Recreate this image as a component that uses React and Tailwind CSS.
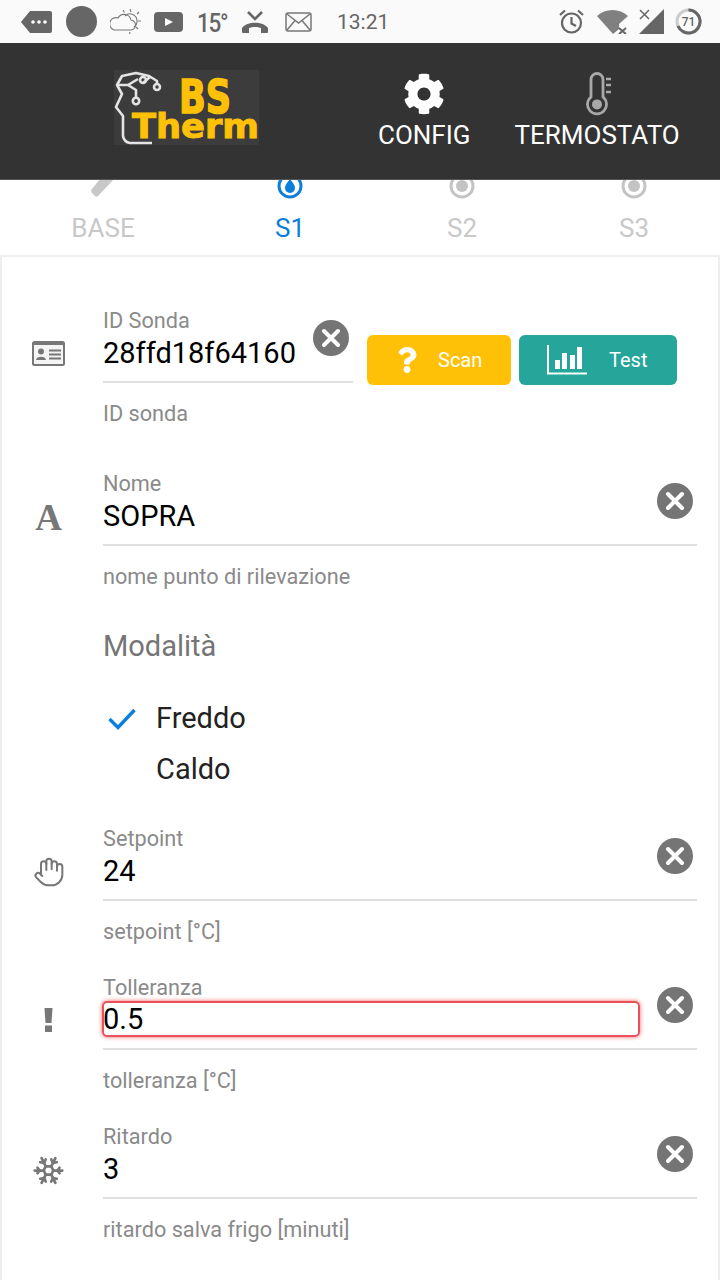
import React from "react";
import { FaCog, FaQuestion } from "react-icons/fa";
import { Hand, Snowflake } from "lucide-react";

const roboto = { fontFamily: "Roboto, sans-serif" };

function Clear() {
  return (
    <svg width="36" height="36" viewBox="0 0 36 36" className="block">
      <circle cx="18" cy="18" r="18" fill="#757575" />
      <path d="M11 11 L25 25 M25 11 L11 25" stroke="#fff" strokeWidth="4" strokeLinecap="round" />
    </svg>
  );
}

function StatusBar() {
  return (
    <div className="h-[43px] bg-[#fafafa] flex items-center pl-[21px] text-[#666]">
      <svg width="31" height="24" viewBox="0 0 31 24" className="block">
        <path d="M9 1 H29 a2 2 0 0 1 2 2 V21 a2 2 0 0 1 -2 2 H9 L0 12 Z" fill="#666" />
        <circle cx="12" cy="12" r="1.8" fill="#fff" /><circle cx="18" cy="12" r="1.8" fill="#fff" /><circle cx="24" cy="12" r="1.8" fill="#fff" />
      </svg>
      <div className="w-[31px] h-[31px] rounded-full bg-[#666] ml-[14px]" />
      <svg width="31" height="28" viewBox="0 0 31 28" className="block ml-[13px]" fill="none" stroke="#777" strokeWidth="1.1">
        <path d="M5 23 H21 a5 5 0 0 0 1 -10 a7 7 0 0 0 -13 -2 a6 6 0 0 0 -4 12 Z" transform="translate(-1 -1)" />
        <path d="M15 8 a7 7 0 0 1 12 5 a7 7 0 0 1 -3 6 M20 1 l1 3 M13 2 l1.5 2.5 M29 4 l-2 2 M31 13 h-3 M28 21 l-2 -2 M20 26 l-.5 -2" />
      </svg>
      <svg width="29" height="20" viewBox="0 0 29 20" className="block ml-[13px]">
        <rect width="29" height="20" rx="4" fill="#666" />
        <path d="M11 6 L19 10 L11 14 Z" fill="#fff" />
      </svg>
      <span className="ml-[14px] mt-[3px] text-[25px] leading-none font-medium tracking-[-1.5px] w-[30px] scale-x-90 origin-left" style={roboto}>15°</span>
      <svg width="28" height="24" viewBox="0 0 28 24" className="block ml-[14px]">
        <path d="M7 2 L14 9 L21 2" fill="none" stroke="#666" strokeWidth="2.6" />
        <path d="M1 22 V18 C6 11 22 11 27 18 V22 a1 1 0 0 1 -1 1 H20 V18 C17 16.5 11 16.5 8 18 V23 H2 a1 1 0 0 1 -1 -1 Z" fill="#666" />
      </svg>
      <svg width="27" height="20" viewBox="0 0 27 20" className="block ml-[16px]" fill="none" stroke="#777" strokeWidth="1.5">
        <rect x="1" y="1" width="25" height="18" rx="2" />
        <path d="M2 2 L13.5 11 L25 2 M2 18 L10 8.5 M25 18 L17 8.5" />
      </svg>
      <span className="ml-[25px] mt-[2px] text-[21px] leading-none w-[52px]" style={roboto}>13:21</span>
      <svg width="25" height="25" viewBox="0 0 25 25" className="block ml-[170px]" fill="none" stroke="#666" strokeWidth="2.2">
        <circle cx="12.5" cy="14" r="9.5" />
        <path d="M12.5 8 V14.5 L17 17 M1 6 L6 1.5 M24 6 L19 1.5" />
      </svg>
      <svg width="31" height="25" viewBox="0 0 31 25" className="block ml-[13px]">
        <path d="M0 7 C8 -1 23 -1 31 7 L22 15 V20 L16 25 Z" fill="#808080" />
        <path d="M22 19 L29 25 M29 19 L22 25" stroke="#666" strokeWidth="2" />
      </svg>
      <svg width="25" height="25" viewBox="0 0 25 25" className="block ml-[11px]">
        <path d="M25 0 V25 H0 Z" fill="#666" />
        <path d="M1 1 L10 10 M10 1 L1 10" stroke="#666" strokeWidth="1.5" />
      </svg>
      <div className="ml-[11px] relative w-[27px] h-[27px]">
        <svg width="27" height="27" viewBox="0 0 27 27" className="block" fill="none" strokeWidth="3">
          <circle cx="13.5" cy="13.5" r="11.5" stroke="#ccc" />
          <path d="M13.5 2 A11.5 11.5 0 1 1 3 18" stroke="#666" />
        </svg>
        <span className="absolute inset-0 flex items-center justify-center text-[12px] font-medium" style={roboto}>71</span>
      </div>
    </div>
  );
}

function Logo() {
  return (
    <svg width="145" height="75" viewBox="0 0 145 75" className="block">
      <rect width="145" height="75" fill="#3c3c3c" />
      <g fill="none" stroke="#e4e4e4" strokeWidth="2.6" strokeLinejoin="round">
        <path d="M38 73 H16 Q10 72 9 66 L9 46 L2 37 L8 24 L3 15 L8 6 L22 3 L35 6 L43 11 V14" />
        <path d="M22 28 V20 L14 15 L24 9 M29 13 L36 7 M3 15 H14" />
        <circle cx="43" cy="17" r="3" />
        <circle cx="29" cy="10" r="3" />
        <circle cx="22" cy="31" r="3.2" />
      </g>
      <g fill="#ffc107" stroke="#ffc107" style={{ fontFamily: "'DejaVu Sans', sans-serif", fontWeight: 700 }}>
        <text x="65" y="43" fontSize="46" strokeWidth="1.6" textLength="52" lengthAdjust="spacingAndGlyphs">BS</text>
        <text x="18" y="68" fontSize="34" strokeWidth="1" textLength="127" lengthAdjust="spacingAndGlyphs">Therm</text>
      </g>
    </svg>
  );
}

function Header() {
  return (
    <div className="h-[137px] bg-[#333] flex pl-[114px] pt-[27px] border-b border-b-[#555]">
      <Logo />
      <div className="ml-[119px] -mt-[2px] flex flex-col items-center text-white">
        <FaCog className="w-[42px] h-[42px] mt-[5px]" />
        <span className="text-[26px] leading-[30px] mt-[5px]" style={roboto}>CONFIG</span>
      </div>
      <div className="ml-[44px] flex flex-col items-center text-white -mt-[2px]">
        <svg width="28" height="44" viewBox="0 0 28 44" className="block mt-[4px] ml-[6px]" fill="none" stroke="#a8a8a8" strokeWidth="2.8">
          <path d="M5 25 V7.5 a6 6 0 0 1 12 0 V25 a9.5 9.5 0 1 1 -12 0 Z" />
          <circle cx="11" cy="32.4" r="5" fill="#a8a8a8" stroke="none" />
          <path d="M20 7 H25 M20 13 H25 M20 20 H25" strokeWidth="2.6" />
        </svg>
        <span className="text-[26px] leading-[30px] mt-[4px]" style={roboto}>TERMOSTATO</span>
      </div>
    </div>
  );
}

function Ring({ active }) {
  const c = active ? "#0b7fdb" : "#c4c4c4";
  return (
    <svg width="26" height="26" viewBox="0 0 26 26" className="block shrink-0">
      <circle cx="13" cy="13" r="11" fill="none" stroke={c} strokeWidth="3" />
      {active ? <path d="M13 6 C16 10 18 12 18 15 a5 5 0 0 1 -10 0 C8 12 10 10 13 6 Z" fill={c} /> : <circle cx="13" cy="13" r="6" fill={c} />}
    </svg>
  );
}

function Tab({ label, active, children, cls }) {
  return (
    <div className={`w-[172px] flex flex-col items-center ${cls || ""}`}>
      <div className="h-[19px] overflow-hidden flex flex-col justify-end">{children}</div>
      <span className={`text-[26px] leading-[30px] mt-[14px] ${active ? "text-[#0b7fdb]" : "text-[#c8c8c8]"}`} style={roboto}>{label}</span>
    </div>
  );
}

function Tabs() {
  return (
    <div className="h-[75px] overflow-hidden flex pl-[17px] bg-white">
      <Tab label="BASE" cls="mr-[15px]">
        <svg width="26" height="19" viewBox="0 0 26 19" className="block shrink-0">
          <path d="M2 11 L10 1 H24 L9 17 a3 3 0 0 1 -4 1 L2 15 a3 3 0 0 1 0 -4 Z" fill="#c8c8c8" transform="translate(0 -2)" />
        </svg>
      </Tab>
      <Tab label="S1" active><Ring active /></Tab>
      <Tab label="S2"><Ring /></Tab>
      <Tab label="S3"><Ring /></Tab>
    </div>
  );
}

function Field({ icon, label, value, helper, width, invalid, after, mt }) {
  return (
    <div className={`flex ${mt}`}>
      <div className="w-[95px] pl-[24px] pt-[27px] shrink-0">
        <div className="w-[33px] h-[36px] flex items-center justify-center text-[#777]">{icon}</div>
      </div>
      <div className={`relative ${width || "w-[594px]"}`}>
        <div className="text-[21.7px] leading-[24px] h-[24px] pt-[1px] text-[#8a8a8a]" style={roboto}>{label}</div>
        <div className="pb-[10px] mt-[3px] border-b-2 border-b-[#e0e0e0]">
          <div
            className={`text-[29px] text-black h-[36px] ${
              invalid
                ? "w-[538px] -ml-[1px] -mt-[1px] mb-[1px] indent-[-1px] rounded-[5px] border-2 border-[#e8505a] shadow-[0_0_4px_rgba(240,60,60,0.8)] leading-[32px]"
                : "leading-[36px]"
            }`}
            style={roboto}
          >
            {value}
          </div>
        </div>
        <div className="text-[21.7px] leading-[24px] h-[24px] pt-[1px] text-[#8a8a8a] mt-[18px]" style={roboto}>{helper}</div>
        <div className="absolute top-[12px] right-[4px]"><Clear /></div>
      </div>
      {after}
    </div>
  );
}

function Buttons() {
  return (
    <div className="flex gap-[8px] ml-[14px] mt-[27px] h-[50px]" style={roboto}>
      <button className="w-[144px] h-[50px] bg-[#ffc107] rounded-[6px] text-white flex items-center pl-[30px]">
        <FaQuestion className="w-[20px] h-[26px]" />
        <span className="ml-[21px] text-[20px]">Scan</span>
      </button>
      <button className="w-[158px] h-[50px] bg-[#26a69a] rounded-[6px] text-white flex items-center pl-[28px]">
        <svg width="40" height="30" viewBox="0 0 40 30" className="block" fill="#fff">
          <path d="M1 0 V28.5 H40" fill="none" stroke="#fff" strokeWidth="2" />
          <rect x="8" y="15" width="5" height="9" />
          <rect x="15" y="8" width="5" height="16" />
          <rect x="23" y="10" width="5" height="14" />
          <rect x="30" y="2" width="5" height="22" />
        </svg>
        <span className="ml-[22px] text-[20px]">Test</span>
      </button>
    </div>
  );
}

function IdCard() {
  return (
    <svg width="33" height="25" viewBox="0 0 33 25" className="block">
      <rect x="1" y="1" width="31" height="23" rx="1.5" fill="#f4f4f4" stroke="#777" strokeWidth="2" />
      <rect x="1" y="1" width="31" height="3" fill="#777" />
      <circle cx="9" cy="10.5" r="3" fill="#777" />
      <path d="M4 19 C4 14.5 14 14.5 14 19 Z" fill="#777" />
      <path d="M17 9.5 H29 M17 13.5 H29 M17 17.5 H29" stroke="#777" strokeWidth="1.8" />
    </svg>
  );
}

function Bang() {
  return (
    <svg width="9" height="24" viewBox="0 0 9 24" className="block">
      <path d="M0.5 0 H8.5 L7.5 15 H1.5 Z" fill="#777" />
      <rect x="1" y="17.5" width="7" height="6.5" fill="#777" />
    </svg>
  );
}

export default function App() {
  return (
    <div className="w-[720px] h-[1280px] overflow-hidden bg-white" style={roboto}>
      <StatusBar />
      <Header />
      <Tabs />
      <div className="border-2 border-[#eee] h-[1040px] pl-[6px] pt-[51px]">
        <Field
          mt=""
          icon={<IdCard />}
          label="ID Sonda"
          value="28ffd18f64160"
          helper="ID sonda"
          width="w-[250px]"
          after={<Buttons />}
        />
        <Field
          mt="mt-[46px]"
          icon={<span className="text-[37px] font-bold leading-none mt-[2px]" style={{ fontFamily: "'Liberation Serif', serif" }}>A</span>}
          label="Nome"
          value="SOPRA"
          helper="nome punto di rilevazione"
        />
        <div className="pl-[95px] mt-[42px]">
          <div className="text-[29px] leading-[32px] text-[#757575]" style={roboto}>Modalità</div>
          <div className="mt-[31px] flex items-center h-[51px]">
            <svg width="28" height="22" viewBox="0 0 28 22" className="block ml-[5px]" fill="none" stroke="#0b7fdb" strokeWidth="3.4">
              <path d="M1.5 11 L10 19.5 L26.5 2" />
            </svg>
            <span className="ml-[20px] text-[29px] text-[#222]" style={roboto}>Freddo</span>
          </div>
          <div className="flex items-center h-[51px] pl-[53px]">
            <span className="text-[29px] text-[#222]" style={roboto}>Caldo</span>
          </div>
        </div>
        <Field
          mt="mt-[31px]"
          icon={<Hand className="w-[32px] h-[32px] mt-[2px]" strokeWidth={1.5} />}
          label="Setpoint"
          value="24"
          helper="setpoint [°C]"
        />
        <Field
          mt="mt-[32px]"
          icon={<Bang />}
          label="Tolleranza"
          value="0.5"
          helper="tolleranza [°C]"
          invalid
        />
        <Field
          mt="mt-[32px]"
          icon={<Snowflake className="w-[33px] h-[33px] shrink-0 mt-[2px]" strokeWidth={2} />}
          label="Ritardo"
          value="3"
          helper="ritardo salva frigo [minuti]"
        />
      </div>
    </div>
  );
}
